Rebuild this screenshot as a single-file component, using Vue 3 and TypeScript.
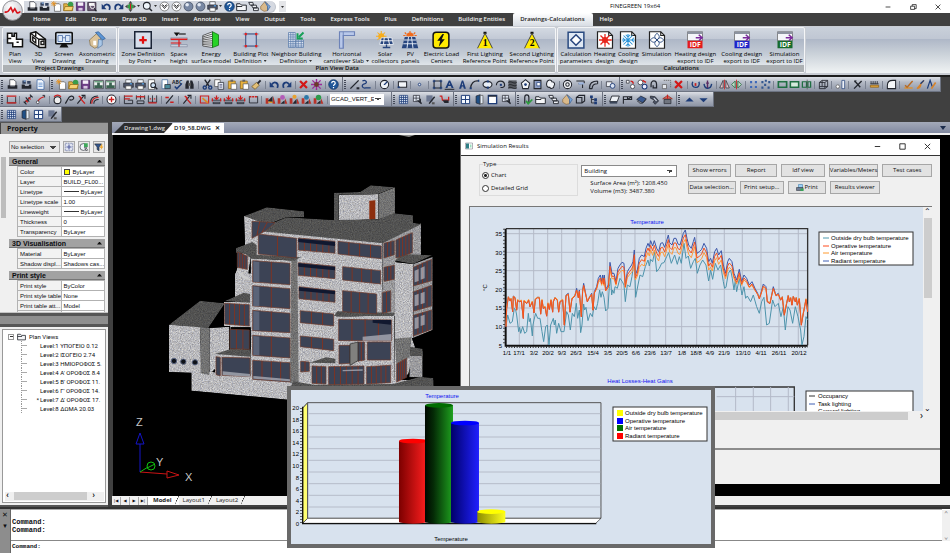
<script setup lang="ts">
import { ref } from 'vue'

type ToolItem = string
interface RibbonItem { icon: string; lines: string[]; drop?: boolean }
interface RibbonPanel { id: string; title: string; items: RibbonItem[] }
interface PropRow { name: string; value: string; kind?: 'color' | 'line' }
interface PropGroup { title: string; rows: PropRow[] }

const N = '#1d3c78'
const K = '#23262e'
const R = '#cc1f1f'
const st = (c: string, w = 1.4) => `fill="none" stroke="${c}" stroke-width="${w}"`

const glyphs: Record<string, string> = {
  drw: `<path d="M4 1h6l3 3v6H4z" fill="#fff" stroke="${K}"/><path d="M1 9h3l1 2h6l1-2h3v5H1z" fill="${K}"/>`,
  bld: `<path d="M2 2h5v5H2zM9 3h5v4H9z" fill="#35435f"/><path d="M4 2h3v2H4z" fill="#7fa6d8"/><path d="M1 8h4l1 2h5l1-2h3v6H1z" fill="${K}"/>`,
  page: `<path d="M3 1h7l3 3v11H3z" fill="#f7fbff" stroke="#2c5aa0"/><path d="M5 6h6M5 8.500h6M5 11h6" ${st('#3f78c4', 1)}/>`,
  new: `<path d="M5 4h7l2 2v9H5z" fill="#fff" stroke="#555"/><path d="M4 0v8M0 4h8M1 1l6 6M7 1L1 7" ${st('#e6901e', 1.2)}/>`,
  open: `<path d="M1 4h5l1 2h7v8H1z" fill="#e2b443" stroke="#8a6414"/><circle cx="11" cy="5" r="4" fill="#3a9c4b"/><path d="M3 8h12l-2 6H1z" fill="#f6d272" stroke="#8a6414"/>`,
  save: `<path d="M2 2h12v12H2z" fill="#6c3d86" stroke="#3e1d55"/><path d="M4 2h8v5H4z" fill="#f4eef8"/><path d="M5 10h6v4H5z" fill="#d8c8e2"/>`,
  saveas: `<path d="M1 2h12v12H1z" fill="#6c5a76" stroke="#2d2433"/><path d="M3 3h8v4H3z" fill="#fff"/><path d="M8 7l7 8-3 0z" fill="${K}"/><circle cx="8" cy="8" r="3" ${st('#eee')}/>`,
  undo: `<path d="M4 8c4-6 11-2 8 5" ${st(N, 2.6)}/><path d="M1 4v8h7z" fill="${N}"/>`,
  redo: `<path d="M12 8C8 2 1 6 4 13" ${st(N, 2.6)}/><path d="M15 4v8H8z" fill="${N}"/>`,
  pan: `<path d="M8 0l3 4H5zM8 16l3-4H5zM0 8l4-3v6zM16 8l-4-3v6z" fill="#444"/><circle cx="8" cy="8" r="4" fill="#35a045"/><path d="M8 4v8" ${st(R, 1.5)}/>`,
  mag: `<circle cx="7" cy="7" r="5" fill="#eef4fa" stroke="${K}" stroke-width="1.5"/><path d="M10.500 10.500l4 4" ${st(K, 2.2)}/>`,
  chk: `<circle cx="8" cy="8" r="6.500" fill="#fbfbfd" stroke="#555"/><path d="M4 6l4 5 4-5M5 5l3 3 3-3" ${st('#333', 1.4)}/>`,
  sphere: `<circle cx="8" cy="8" r="6.500" fill="#7888a4" stroke="#3c4659"/><circle cx="6" cy="5.500" r="2.600" fill="#e3e9f3"/>`,
  print: `<path d="M4 1h8v5H4z" fill="#f5f9ff" stroke="#444"/><path d="M1 6h14v6H1z" fill="#4d566b" stroke="${K}"/><path d="M4 10h8v5H4z" fill="#fff" stroke="#444"/><path d="M10 7h3" ${st('#57b1ff', 1.5)}/>`,
  printc: `<path d="M5 1h8v7H5z" fill="#9bd0f5" stroke="#2b6ca0"/><path d="M1 7h13v6H1z" fill="#6f7c94" stroke="${K}"/><path d="M9 9h6v5H9z" fill="#37a457"/>`,
  help: `<circle cx="8" cy="8" r="7" fill="#1f5799" stroke="#0e2f5c"/><path d="M5.500 6c0-3.500 5-3 5 0 0 2-2.500 1.700-2.500 4M8 11.500v2" ${st('#fff', 1.8)}/>`,
  folder: `<path d="M1 4h5l2 2h7v8H1z" fill="#f5f6f8" stroke="${K}" stroke-width="1.400"/><path d="M1 8h8" ${st(K)}/>`,
  copy3: `<path d="M1 2h6l1 4H3zM5 6h7l1 4H7zM8 10h7v4H8z" fill="#eceef2" stroke="${K}" stroke-width="1.300"/>`,
  house: `<path d="M1 8l6-7 4 3v10l-5 1-5-3z" fill="#d9b98a" stroke="#8a6b42"/><path d="M7 1l8 7-4 6V8z" fill="#7ba8dc" stroke="#3a6096"/>`,
  img: `<path d="M1 2h14v12H1z" fill="#e9ecec" stroke="${K}"/><path d="M2 13V9h4V5h4v4h4v4z" fill="#3b6351"/><path d="M2 4h12" ${st('#4a8f63', 1.500)}/>`,
  preview: `<path d="M2 1h9v14H2z" fill="#fff" stroke="#444"/><circle cx="9" cy="9" r="3.500" fill="#cfe2f5" stroke="${K}" stroke-width="1.500"/><path d="M11 11l4 4" ${st(K, 2)}/>`,
  publish: `<path d="M3 1h8v13H3z" fill="#fff" stroke="#3e6c9f"/><path d="M7 8h8v6H7z" fill="#4c8b9b" stroke="${K}"/>`,
  abc: `<text x="0" y="7" font-size="7.500" font-weight="700" fill="${K}">ABC</text><path d="M4 11l3 3 7-7" ${st(N, 2.200)}/>`,
  find: `<path d="M2 14V8l2-6h3v12zM14 14V8l-2-6H9v12z" fill="${K}"/><path d="M6 6h4v4H6z" fill="#555"/>`,
  cut: `<path d="M4 1l6 9M12 1L6 10" ${st(K, 2)}/><circle cx="4" cy="12.500" r="2.300" ${st(N, 2)}/><circle cx="12" cy="12.500" r="2.300" ${st(N, 2)}/>`,
  copy: `<path d="M1 1h8v10H1z" fill="#fff" stroke="#444"/><path d="M6 5h8v10H6z" fill="#e2e9f4" stroke="${K}"/><path d="M8 8h4M8 10h4M8 12h4" ${st('#557', 1)}/>`,
  paste: `<path d="M2 3h10v11H2z" fill="#e9b13c" stroke="#8a6414"/><path d="M5 1h4v3H5z" fill="#666"/><path d="M6 7h8v8H6z" fill="#fff" stroke="#555"/>`,
  brush: `<path d="M13 1l2 2-5 5-2-2z" fill="${K}"/><path d="M8 5l4 4-6 6-5-4z" fill="#e3c078" stroke="#6c5320"/>`,
  del: `<path d="M3 3l10 10M13 3L3 13" ${st('#d31616', 3.200)}/>`,
  burst: `<path d="M8 0v16M0 8h16M2 2l12 12M14 2L2 14" ${st('#9b2a9b', 2)}/><circle cx="8" cy="8" r="3.500" fill="#6a3a2a"/>`,
  line: `<path d="M2 14L14 2" ${st(K, 2)}/><path d="M11 12h4v3h-4z" fill="${K}"/>`,
  pline: `<path d="M2 3c6-3 8 3 3 4s-4 7 2 6h7" ${st(N, 1.800)}/>`,
  circle: `<circle cx="8" cy="8" r="6" fill="#eef2f7" stroke="${K}" stroke-width="1.500"/><path d="M8 8l4-4M7 8h2" ${st(N, 1.700)}/>`,
  rect: `<path d="M2 4h12v8H2z" fill="#f3f6fa" stroke="${K}" stroke-width="1.500"/><path d="M1 12h3" ${st(N, 2.500)}/>`,
  dot: `<circle cx="8" cy="8" r="1.800" fill="#e8edf4" stroke="${N}" stroke-width="1.300"/>`,
  region: `<path d="M3 3h10v10H3z" ${st(K, 1.600)}/><path d="M1 3h4M3 1v4M11 3h4M13 1v4M1 13h4M3 11v4M11 13h4M13 11v4" ${st(N, 1.400)}/>`,
  bigA: `<path d="M2 13L7 2h2l5 11h-3l-1-3H6l-1 3zM7 8h2L8 5z" fill="${N}"/><path d="M1 15h14" ${st(K, 1.500)}/>`,
  capA: `<path d="M3 14L7 2h2l4 12h-3l-1-3H7l-1 3zM7 9h2L8 5z" fill="${N}"/>`,
  arc: `<path d="M2 14C3 6 7 2 14 3" ${st(K, 1.700)}/><path d="M1 12h3v3H1zM13 1h2v3h-2z" fill="${N}"/>`,
  ellipse: `<ellipse cx="8" cy="8" rx="6.500" ry="4.500" fill="#e8eef6" stroke="${K}" stroke-width="1.600"/><path d="M7 2h3v3H7zM7 11h3v3H7z" fill="${N}"/>`,
  earc: `<path d="M2 9c0-8 12-8 12 0 0 3-4 4-6 3" ${st(K, 1.700)}/><path d="M7 7h3v3H7z" fill="${N}"/>`,
  hatch: `<path d="M2 2h12v12H2z" fill="#55585f"/><path d="M2 5c4-3 8 3 12 0M2 9c4-3 8 3 12 0M2 13c4-3 8 3 12 0" ${st('#16181c', 1.200)}/>`,
  poly: `<path d="M8 1l6 5-2 8H4L2 6z" fill="#f1f4f8" stroke="${K}" stroke-width="1.500"/><circle cx="8" cy="8" r="2" fill="${N}"/>`,
  wip: `<path d="M3 2h10v12H3z" fill="#8f9fc4" stroke="${K}" stroke-width="1.500"/><path d="M7 5h5v5H7z" fill="#fff" stroke="${N}"/>`,
  cloud: `<path d="M3 4c2-4 7-3 7 0 4 0 5 4 3 6 0 4-5 5-6 2-4 1-6-3-4-8z" fill="#f3f5f9" stroke="${K}" stroke-width="1.500"/>`,
  donut: `<circle cx="8" cy="8" r="6" fill="#f3f5f9" stroke="${K}" stroke-width="1.500"/><circle cx="8" cy="8" r="2.500" ${st(K, 1.500)}/>`,
  spline: `<path d="M2 3h11c3 4-5 4-8 4M6 7l5 0v6" ${st(K, 1.500)}/><path d="M5 5h8v3H5z" fill="#9db4dd"/>`,
  off: `<path d="M2 14C2 6 6 3 14 3M6 14c0-5 3-7 8-7M2 14h4M14 3v4" ${st(K, 1.600)}/>`,
  block: `<path d="M2 4h8v7H2z" fill="#eef1f6" stroke="${K}"/><circle cx="11" cy="10" r="3.500" fill="#dbe4f2" stroke="${N}" stroke-width="1.300"/>`,
  cyc: `<path d="M2 2h4v4H2z" fill="#fff" stroke="${K}"/><circle cx="11" cy="11" r="3" fill="#fff" stroke="${K}"/><path d="M8 3c4 0 4 2 4 4" ${st(R, 2)}/>`,
  cyc2: `<circle cx="5" cy="5" r="3.500" fill="#fff" stroke="${K}"/><circle cx="11" cy="11" r="3.500" fill="#eef" stroke="${N}" stroke-width="1.500"/><path d="M8 2l5 3" ${st(R, 2)}/>`,
  lock: `<path d="M3 12V8c0-7 8-7 8 0v5H6V9" ${st(K, 1.800)}/>`,
  scale: `<path d="M2 8h6v6H2z" fill="#e6e9ee" stroke="#555"/><path d="M4 2h10v10" fill="none" stroke="#555" stroke-dasharray="2 1"/>`,
  rot: `<path d="M4 4c-5 10 13 12 9 0" ${st(N, 2)}/><path d="M8 6v4" ${st(R, 2.500)}/>`,
  rot2: `<path d="M3 7c1 9 10 8 11 0" ${st(N, 2)}/><path d="M8 2v11M6 6h4" ${st('#5b2b62', 2)}/>`,
  mirror: `<path d="M6 2v11H1zM10 2v11h5z" fill="#e9c9cd" stroke="${K}"/><path d="M8 1v14" ${st(R, 1.200)}/>`,
  mirror2: `<path d="M6 3L1 8l5 5zM10 3l5 5-5 5z" fill="#c4e3cf" stroke="#2f6f44" stroke-width="1.300"/><path d="M8 1v14" ${st(R, 1.200)}/>`,
  array: `<path d="M3 3h3v3H3zM10 3h3v3h-3zM3 10h3v3H3zM10 10h3v3h-3z" fill="#3c68b8"/>`,
  array2: `<path d="M7 1h3v3H7zM2 3h3v3H2zM12 3h3v3h-3zM6 7h3v3H6zM2 11h3v3H2zM11 11h3v3h-3z" fill="#33578f"/>`,
  trim: `<path d="M2 4h12v8H2z" fill="none" stroke="#1f6e42" stroke-width="2.400"/><path d="M5 2h6" ${st('#b7d4c3', 2)}/>`,
  ext: `<path d="M2 4h12v8H2z" fill="#d5eadd" stroke="#1f6e42" stroke-width="2.200"/>`,
  brk: `<path d="M2 4h6v8H2zM10 4h4v8h-4z" fill="none" stroke="#1f6e42" stroke-width="1.800"/><path d="M9 1v14" ${st('#555', 1)}/>`,
  box3: `<path d="M2 5l4-3h8v9l-4 3H2zM2 5h8v9M10 5l4-3M6 2v9H2M6 11h8" ${st(K, 1.200)}/>`,
  align: `<circle cx="4" cy="11" r="2.500" fill="#fff" stroke="#555"/><path d="M10 2h4v12h-4z" fill="#eef1f6" stroke="${N}"/>`,
  xl: `<path d="M3 14L14 3M4 3l8 9" ${st(K, 2)}/><path d="M3 2h4l-3 3z" fill="${K}"/>`,
  rul: `<path d="M2 9h12v3H2z" fill="#e0a53a" stroke="#8a5a10"/><path d="M3 3v4M6 3v4M9 3v4M12 3v4M2 7h12" ${st(K, 1.200)}/>`,
  fill: `<path d="M2 14V9c0-5 4-7 8-7h4v12z" fill="#f5f7fa" stroke="${K}" stroke-width="1.500"/>`,
  pen: `<path d="M2 13h12" ${st('#e0902a', 2)}/><path d="M3 9l3 3 8-9" ${st('#b96a22', 2)}/>`,
  pen2: `<path d="M3 14L13 2M3 14c4-1 6-4 5-7" ${st('#d8842a', 2.200)}/><path d="M8 7l5-5" ${st(N, 2)}/>`,
  pen3: `<path d="M2 14L6 2l3 9" ${st(N, 1.800)}/><path d="M8 14l6-9" ${st('#d8842a', 2.500)}/>`,
  dim: `<path d="M2 4v9h12V4" ${st(K, 1.200)}/><path d="M1 3h14M1 13h14" ${st(R, 1.800)}/>`,
  dimA: `<path d="M2 13L12 3M4 5l5 6M1 11l4 4M10 1l4 4" ${st(K, 1.600)}/><path d="M4 9l3 3M8 5l3 3" ${st(R, 2)}/>`,
  dimR: `<path d="M4 13c0-5 3-7 9-9" ${st(R, 1.800)}/><circle cx="4" cy="12" r="2" fill="#fff" stroke="${K}"/><path d="M11 2h3v3" ${st(K)}/>`,
  dimC: `<circle cx="8" cy="9" r="5" fill="#eee" stroke="${K}" stroke-width="1.500"/><path d="M3 4c3-3 7-3 10 0" ${st(R, 2)}/>`,
  lead: `<path d="M2 14l4-7c2-5 7-5 8-2s-4 5-6 3" ${st(K, 1.800)}/>`,
  dimX: `<path d="M2 14L11 3M8 2h5v5" ${st(K, 1.600)}/><path d="M6 6l7 8M4 3l4 3" ${st(R, 2)}/>`,
  dimO: `<path d="M2 14C2 7 6 3 13 3M7 14c0-4 2-6 7-6" ${st(K, 1.500)}/><path d="M4 14C4 8 8 5 14 5" ${st(R, 1.700)}/>`,
  plus: `<circle cx="8" cy="8" r="6.500" fill="#fff" stroke="${K}" stroke-width="1.500"/><path d="M4 8h8M8 4v8" ${st(R, 2)}/>`,
  dimB: `<path d="M2 2v12h12V9H7" ${st(K, 1.300)}/><path d="M2 3h12M2 7h8" ${st(R, 2)}/>`,
  dimD: `<path d="M2 2v6M8 2v6M14 2v6M3 10h10v4H3z" ${st(K, 1.300)}/><path d="M2 4h12" ${st(R, 2)}/>`,
  dimE: `<path d="M2 2v10h12V2M8 2v10" ${st(K, 1.200)}/><path d="M4 7h2M10 7h2M2 13h12" ${st(R, 1.800)}/>`,
  tol: `<path d="M3 14L13 2" ${st(K, 1.700)}/><path d="M2 5h5M9 12h5" ${st(R, 2)}/>`,
  edit: `<path d="M2 3h12v10H2z" ${st(R, 1.600)}/><path d="M5 6l8 7" ${st('#dd8b24', 2.500)}/>`,
  dimF: `<path d="M1 9h14M3 12h10v2H3z" ${st(K, 1.200)}/><path d="M8 2v6M5 5l3 3 3-3M2 6v5M14 6v5" ${st(R, 1.700)}/>`,
  dimG: `<path d="M2 3v10h12V3" ${st(K, 1.200)}/><path d="M2 4h12" stroke="${R}" stroke-width="2" stroke-dasharray="3 1"/>`,
  persA: `<path d="M1 6v8h4V6zM12 3l3 11h-4z" fill="#b8332a"/><path d="M4 10l7-7v10z" fill="${K}"/><path d="M5 12h6" ${st('#e8a12e', 2)}/>`,
  persB: `<path d="M1 6v8h4V6zM12 6l3 8h-4z" fill="#b8332a"/><circle cx="8" cy="5" r="3.500" fill="#b45bb8"/><path d="M5 14h6V9z" fill="${K}"/>`,
  persC: `<path d="M1 6v8h4V6zM12 6l3 8h-4z" fill="#b8332a"/><circle cx="8" cy="4" r="3" fill="#e8a12e"/><path d="M5 14l6-7v7z" fill="${K}"/>`,
  persD: `<path d="M1 6v8h4V6zM12 6l3 8h-4z" fill="#b8332a"/><circle cx="8" cy="5" r="3.500" fill="#2c78a8"/><path d="M5 14l6-5v5z" fill="${K}"/>`,
  persE: `<path d="M1 6v8h4V6zM12 6l3 8h-4z" fill="#b8332a"/><circle cx="8" cy="5" r="4" fill="#2d9a4b"/><path d="M5 14l6-5v5z" fill="${K}"/>`,
  mesh: `<path d="M2 2h12v12H2z" fill="#d5e1f2" stroke="${N}"/><path d="M2 5h12M2 8h12M2 11h12M5 2v12M8 2v12M11 2v12" ${st(N, 1.100)}/>`,
  door: `<path d="M3 3l6-2v14l-6-2z" fill="#1f4f86" stroke="${K}"/><path d="M9 2h4v12H9z" fill="#e3ecf7" stroke="#555"/>`,
  win: `<path d="M2 2h12v12H2z" fill="#f3f8ff" stroke="${N}" stroke-width="1.400"/><path d="M8 2v12M2 8h12" ${st(N, 1.400)}/>`,
  winD: `<path d="M2 2h9v9H2z" fill="#dfe6f0" stroke="${K}"/><path d="M2 6h9M6 2v9" ${st(K, 1)}/><path d="M8 9l6 5M12 7v6" ${st(K, 2)}/>`,
  meshD: `<path d="M2 2h9v9H2z" fill="#6c7790"/><path d="M6 14L14 4" ${st(K, 2)}/><path d="M10 12h4v3h-4z" fill="#555"/>`,
  frame: `<path d="M2 2h12v12H2z" fill="#fff" stroke="${N}" stroke-width="2"/><path d="M2 3h12" ${st(K, 2)}/>`,
  cart: `<path d="M1 3l3 0 1 6h9V4" ${st(R, 1.800)}/><path d="M5 9h9v4H8z" fill="${K}"/>`,
  okp: `<path d="M4 14V5c0-5 6-5 6 0v8" ${st(K, 1.700)}/><path d="M6 10l3 4 6-6" ${st('#2d9a3e', 2.500)}/>`,
  tree: `<path d="M3 2h4v4H3zM9 6h4v4H9zM9 11h4v4H9z" fill="${N}"/><path d="M5 6v7h4M5 8h4" ${st(K, 1.200)}/>`,
  cube: `<path d="M2 5h8v8H2zM2 5l4-3h8v8l-4 3" ${st(K, 1.600)}/>`,
  slab: `<path d="M4 3h11l-3 8H1z" fill="#eef1f5" stroke="${K}" stroke-width="1.300"/><path d="M1 11h11v3H1z" fill="#3a4559"/>`,
  stair: `<path d="M2 14V4h12M2 8h6V4M8 8l6-4v4H8" ${st(K, 1.600)}/>`,
  roof: `<path d="M1 8l6-5 8 4-5 6z" fill="#39598f" stroke="${K}"/><path d="M2 10c4 5 8 5 12-2" ${st(K, 1.300)}/>`,
  pipe: `<path d="M2 3l7 1 5 6-5 5-3-3 2-3-6-3z" fill="#4a5162" stroke="${K}"/><path d="M7 6l4 4" ${st('#dfe5ee', 1.500)}/>`,
  hut: `<path d="M1 7l7-5 7 5z" fill="#d0645a" stroke="#8b2a22"/><path d="M3 8h10v6H3z" fill="#70757f" stroke="${K}"/><path d="M8 1v6" ${st(R, 1.500)}/>`,
  up: `<path d="M2 11l6-6 6 6z" fill="${N}"/>`,
  down: `<path d="M2 6l6 6 6-6z" fill="${N}"/>`,
  filt: `<path d="M1 3h11l-4 5v6l-3-2V8z" fill="#33578f" stroke="${K}"/><path d="M12 4l-3 5h3l-2 5 5-7h-3l2-3z" fill="#f0a31e"/>`,
  sel: `<path d="M2 2h12v12H2z" fill="#dfe3f0" stroke="#5d6796" stroke-dasharray="3 1"/><path d="M4 8h8M8 4v8" ${st('#5560a0', 1.800)}/>`,
  quick: `<circle cx="7" cy="8" r="5.500" fill="#eef2f7" stroke="${K}"/><path d="M8 2h6v6H8z" fill="#3fa85a"/><path d="M9 8l5 5-3 1z" fill="#fff" stroke="${K}"/>`,
}

const big: Record<string, string> = {
  plan: `<path d="M2 3h6v4h3V3h3v8h8v10H9v-5H2z" fill="#fff" stroke="#111" stroke-width="2"/><path d="M2 10h5M14 15h3" ${st('#111', 2)}/>`,
  view3d: `<path d="M2 3l7-2 13 10v11l-8 0L2 14z" fill="#fff" stroke="#111" stroke-width="2"/><path d="M2 3l11 8v11M13 11h9M5 8l4 3v5l-4-3zM16 14l4-1v5h-4zM9 1v6" ${st('#111', 1.800)}/>`,
  screen: `<rect x="1" y="2" width="22" height="15" rx="1.500" fill="#dce8f6" stroke="#111" stroke-width="2.200"/><path d="M4 6h6v8H4zM14 6h6v8h-6zM10 9h4" ${st('#5a7bb0', 1.200)}/><path d="M9 17h6l3 5H6z" fill="#111"/>`,
  axo: `<path d="M2 12l10-9 5 3v13l-8 4-6-4z" fill="#dbc39a" stroke="#8a744c"/><path d="M10 2l4-1 9 9-4 2z" fill="#5b94d4" stroke="#2e5c96"/><path d="M14 11l5 1v7l-6 4z" fill="#a9c7e8" stroke="#5e7ea4"/><path d="M7 13h4v6H7z" fill="#fff"/>`,
  zone: `<path d="M1 1h22v22H1z" fill="#d7dfec" stroke="#1b2436" stroke-width="2"/><path d="M12 7v10M7 12h10" ${st('#e01010', 3)}/>`,
  height: `<path d="M5 2h8L9 7z" fill="#111"/><path d="M12 4h9" ${st('#111', 1.500)}/><path d="M1 9h22v3H1zM1 18h22v3H1z" fill="#c9cfdb" stroke="#8a93a8"/><path d="M1 11h22" ${st('#e01010', 1.800)}/><path d="M1 16h14M12 12v9" ${st('#e01010', 1.500)}/>`,
  energy: `<path d="M1 6l13-5v21L1 20z" fill="#f1f3f6" stroke="#333"/><path d="M1 8l13-4M1 10l13-3M1 12l13-2M1 14l13-1M1 16h13M1 18l13 1" ${st('#333', 1)}/><path d="M14 1l8 4v14l-8 3z" fill="#27d327" stroke="#127012"/>`,
  plot: `<path d="M5 1v22M19 1v22M1 4h22M1 20h22" ${st('#8196bd', 1.500)}/><path d="M5 4h14v16H5z" fill="#b9c5dc" stroke="#3a4d7a" stroke-width="1.300"/><path d="M3.500 2.500h3v3h-3zM17.500 2.500h3v3h-3zM3.500 18.500h3v3h-3zM17.500 18.500h3v3h-3z" fill="#e02020"/>`,
  neighbor: `<path d="M2 2h9v20H2zM12 12h10v10H12z" fill="#dfe7f4" stroke="#5d7dab"/><path d="M2 5h9M2 8h9M2 11h9M2 14h20M2 17h20M2 20h20M5 2v20M8 2v20M15 12v10M19 12v10" ${st('#5d7dab', 1)}/><path d="M22 2l-6 6M14 3v7h7" ${st('#17a058', 2.600)}/>`,
  cant: `<path d="M2 1h20v5H7v17H2z" fill="#b8c8ea" stroke="#6d83b8" stroke-width="1.500"/><path d="M7 1v22" ${st('#6d83b8', 1.200)}/>`,
  solar: `<circle cx="7" cy="7" r="4" fill="#f7ad1d"/><path d="M7 0v14M0 7h14M2 2l10 10M12 2L2 12" ${st('#f7ad1d', 1.400)}/><path d="M7 9h14l2 9H5z" fill="#27457e" stroke="#fff"/><path d="M6 13h16M11 9l-1 9M16 9l2 9" ${st('#fff', 1.200)}/><path d="M14 18v4M9 22h10" ${st('#27457e', 1.800)}/>`,
  pv: `<path d="M7 7a5 5 0 0 1 10 0z" fill="#f06a1c"/><path d="M12 0v3M5 2l2 2M19 2l-2 2M3 6h3M21 6h-3" ${st('#f06a1c', 1.500)}/><path d="M5 8h14l4 15H1z" fill="#27457e"/><path d="M4 12h16M3 17h18M10 8l-2 15M14 8l2 15" ${st('#dfe7f4', 1.300)}/>`,
  elec: `<rect x="1.500" y="1.500" width="21" height="21" rx="4" fill="#ffea00" stroke="#111" stroke-width="2"/><path d="M14 4L7 13h4l-2 8 8-10h-4l3-7z" fill="#111"/>`,
  light1: `<path d="M10 1h4v3h-4z" fill="#111"/><path d="M12 3l10 20H2z" fill="#ffea00"/><path d="M12 3l10 20M12 3L2 23" ${st('#444', 1.300)}/><text x="9" y="20" font-family="Liberation Serif, serif" font-size="13" font-weight="700">1</text>`,
  light2: `<path d="M10 1h4v3h-4z" fill="#111"/><path d="M12 3l10 20H2z" fill="#ffea00"/><path d="M12 3l10 20M12 3L2 23" ${st('#444', 1.300)}/><text x="9" y="20" font-family="Liberation Serif, serif" font-size="13" font-weight="700">2</text>`,
  calc: `<path d="M1.500 1.500h21v21h-21z" fill="#dfe8f4" stroke="#2a4a80" stroke-width="2"/><path d="M12 5l7 7-7 7-7-7z" fill="#fff" stroke="#27457e" stroke-width="2"/>`,
  heat: `<path d="M2 1h15l5 5v17H2z" fill="#fff" stroke="#222" stroke-width="1.600"/><path d="M17 1v5h5" ${st('#222', 1.500)}/><path d="M12 4v17M4 12h17M6 6l12 12M18 6L6 18" ${st('#e8261c', 1.700)}/><circle cx="12" cy="12" r="4" fill="#e8261c"/>`,
  cool: `<path d="M2 1h15l5 5v17H2z" fill="#fff" stroke="#222" stroke-width="1.600"/><path d="M17 1v5h5" ${st('#222', 1.500)}/><path d="M12 4v17M4 12h17M6 6l12 12M18 6L6 18M9 5l3 3 3-3M9 20l3-3 3 3M5 9l3 3-3 3M20 9l-3 3 3 3" ${st('#2a93d8', 1.400)}/>`,
  sim: `<path d="M2 1h15l5 5v17H2z" fill="#fff" stroke="#222" stroke-width="1.600"/><path d="M17 1v5h5" ${st('#222', 1.500)}/><path d="M12 3c4 4 4 5 0 9-4-4-4-5 0-9zM12 12c4 4 4 5 0 9-4-4-4-5 0-9zM3 12c4-4 5-4 9 0-4 4-5 4-9 0zM12 12c4-4 5-4 9 0-4 4-5 4-9 0z" ${st('#2a4a80', 1.300)}/>`,
}
const idf = (c: string) =>
  `<path d="M2 1h20v12H2z" fill="#f4f6fa" stroke="#666"/><path d="M2 1h20v3H2z" fill="#8c93a0"/><path d="M2 13h20v10H2z" fill="${c}"/><text x="5" y="21" font-size="9" font-weight="700" fill="#fff">IDF</text><path d="M13 9h8M17 5l4.500 4-4.500 4" ${st('#7a2a9b', 2)}/>`
big.idfR = idf('#e31b1b')
big.idfB = idf('#1f24c9')
big.idfG = idf('#176b2c')

const quick = ['drw', 'bld', 'new', 'open', 'save', 'saveas', '|', 'undo', 'redo', 'pan', '^', 'mag', '^', 'chk', 'chk', 'sphere', 'sphere', 'print', '^', 'help', 'folder', 'copy3', 'house']

const menus = ['Home', 'Edit', 'Draw', 'Draw 3D', 'Insert', 'Annotate', 'View', 'Output', 'Tools', 'Express Tools', 'Plus', 'Definitions', 'Building Entities', 'Drawings-Calculations', 'Help']
const activeMenu = ref('Drawings-Calculations')

const panels: RibbonPanel[] = [
  { id: 'proj', title: 'Project Drawings', items: [
    { icon: 'plan', lines: ['Plan', 'View'] }, { icon: 'view3d', lines: ['3D', 'View'] },
    { icon: 'screen', lines: ['Screen', 'Drawing'] }, { icon: 'axo', lines: ['Axonometric', 'Drawing'] } ] },
  { id: 'data', title: 'Plan View Data', items: [
    { icon: 'zone', lines: ['Zone Definition', 'by Point'], drop: true }, { icon: 'height', lines: ['Space', 'height'] },
    { icon: 'energy', lines: ['Energy', 'surface model'] }, { icon: 'plot', lines: ['Building Plot', 'Definition'], drop: true },
    { icon: 'neighbor', lines: ['Neighbor Building', 'Definition'], drop: true }, { icon: 'cant', lines: ['Horizontal', 'cantilever Slab'], drop: true },
    { icon: 'solar', lines: ['Solar', 'collectors'] }, { icon: 'pv', lines: ['PV', 'panels'] },
    { icon: 'elec', lines: ['Electric Load', 'Centers'] }, { icon: 'light1', lines: ['First Lighting', 'Reference Point'] },
    { icon: 'light2', lines: ['Second Lighting', 'Reference Point'] } ] },
  { id: 'calc', title: 'Calculations', items: [
    { icon: 'calc', lines: ['Calculation', 'parameters'] }, { icon: 'heat', lines: ['Heating', 'design'] },
    { icon: 'cool', lines: ['Cooling', 'design'] }, { icon: 'sim', lines: ['Simulation', ''] },
    { icon: 'idfR', lines: ['Heating design', 'export to IDF'] }, { icon: 'idfB', lines: ['Cooling design', 'export to IDF'] },
    { icon: 'idfG', lines: ['Simulation', 'export to IDF'] } ] },
]

const bars: { id: string; tools: ToolItem[][] }[] = [
  { id: 'one', tools: [
    'drw bld page'.split(' '),
    'new open save img img | print print preview publish abc find | cut copy paste paste brush | undo redo | del burst | help'.split(' '),
    'line pline | circle | rect | dot | region bigA capA arc ellipse earc hatch poly wip cloud | donut spline off | block'.split(' '),
    'cyc cyc2 lock scale del | rot rot2 | mirror mirror2 | array array2 | trim ext brk | box3 | align | xl | rul | fill | pen pen2 pen3'.split(' '),
  ] },
  { id: 'two', tools: [
    'dim | dimA dimR | dimC lead dimX dimO | plus | dimB dimD dimE | tol | dimX | edit dimF dimF dimF dimG | persA persB persC persD persE | #'.split(' '),
    'mesh winD meshD cart'.split(' '),
    'win door frame winD'.split(' '),
    'okp folder copy3 house cube tree'.split(' '),
    'slab stair roof pipe hut'.split(' '),
    'up down'.split(' '),
  ] },
  { id: 'three', tools: ['mesh door win meshD'.split(' ')] },
]

const groups: PropGroup[] = [
  { title: 'General', rows: [
    { name: 'Color', value: 'ByLayer', kind: 'color' }, { name: 'Layer', value: 'BUILD_FL00...' },
    { name: 'Linetype', value: 'ByLayer', kind: 'line' }, { name: 'Linetype scale', value: '1.00' },
    { name: 'Lineweight', value: 'ByLayer', kind: 'line' }, { name: 'Thickness', value: '0' },
    { name: 'Transparency', value: 'ByLayer' } ] },
  { title: '3D Visualisation', rows: [
    { name: 'Material', value: 'ByLayer' }, { name: 'Shadow displ...', value: 'Shadows cas...' } ] },
  { title: 'Print style', rows: [
    { name: 'Print style', value: 'ByColor' }, { name: 'Print style table', value: 'None' },
    { name: 'Print table att...', value: 'Model' }, { name: 'Print table type', value: 'Color depend...' } ] },
]

const levels = ['Level:1 ΥΠΟΓΕΙΟ 0.12', 'Level:2 ΙΣΟΓΕΙΟ 2.74', 'Level:3 ΗΜΙΟΡΟΦΟΣ 5.', "Level:4 Α' ΟΡΟΦΟΣ 8.4", "Level:5 Β' ΟΡΟΦΟΣ 11.", "Level:6 Γ' ΟΡΟΦΟΣ 14.", "Level:7 Δ' ΟΡΟΦΟΣ 17.", 'Level:8 ΔΩΜΑ 20.03']

// Facade glazing: four corners (clockwise from top left) and number of panes
const glazing: number[][] = [
  [276, 124, 345, 128, 320, 150, 276, 175, 3],
  [295, 162, 410, 175, 410, 234, 295, 222, 2], [415, 174, 525, 184, 525, 220, 415, 210, 6], [534, 184, 664, 198, 664, 236, 534, 222, 4],
  [415, 248, 525, 259, 525, 296, 415, 286, 6], [548, 260, 662, 272, 662, 312, 548, 300, 4],
  [417, 320, 525, 332, 525, 367, 417, 356, 6], [548, 332, 650, 342, 650, 402, 548, 395, 4],
  [421, 392, 521, 402, 521, 438, 421, 428, 3], [421, 468, 521, 478, 521, 512, 421, 500, 3],
  [278, 242, 390, 250, 390, 314, 278, 306, 2], [278, 317, 390, 326, 390, 386, 278, 378, 2], [278, 391, 390, 400, 390, 458, 278, 452, 2],
  [278, 466, 390, 474, 390, 534, 278, 526, 2], [278, 541, 390, 548, 390, 606, 278, 598, 4],
  [672, 190, 703, 182, 703, 224, 672, 234, 3], [708, 180, 757, 158, 757, 218, 708, 234, 5], [672, 262, 703, 256, 703, 298, 672, 304, 3],
  [667, 338, 692, 332, 692, 394, 667, 400, 2],
  [194, 370, 268, 374, 268, 438, 194, 432, 5], [210, 448, 268, 450, 268, 508, 210, 506, 3], [186, 532, 270, 534, 270, 590, 186, 586, 1],
  [168, 530, 181, 532, 181, 588, 168, 584, 1],
  [760, 262, 815, 238, 815, 302, 760, 318, 4], [760, 336, 815, 316, 815, 378, 760, 394, 4], [760, 406, 815, 390, 815, 448, 760, 468, 4],
  [536, 418, 695, 420, 695, 482, 536, 482, 4], [537, 496, 570, 496, 570, 550, 537, 552, 1], [622, 486, 692, 486, 692, 540, 622, 540, 1], [594, 486, 614, 486, 614, 540, 594, 544, 2],
  [456, 558, 498, 560, 498, 612, 456, 610, 3], [506, 560, 612, 558, 612, 612, 506, 614, 6], [620, 560, 692, 556, 692, 608, 620, 612, 5],
  [710, 552, 740, 535, 740, 592, 710, 606, 5], [422, 544, 448, 546, 448, 574, 422, 576, 2],
  [232, 216, 262, 228, 262, 268, 232, 262, 4],
]
const quad = (q: number[]) => `${q[0]},${q[1]} ${q[2]},${q[3]} ${q[4]},${q[5]} ${q[6]},${q[7]}`
const mullions = (q: number[]) => {
  const out: string[] = []
  for (let i = 1; i < q[8]; i++) {
    const t = i / q[8]
    const ax = q[0] + (q[2] - q[0]) * t, ay = q[1] + (q[3] - q[1]) * t
    const bx = q[6] + (q[4] - q[6]) * t, by = q[7] + (q[5] - q[7]) * t
    out.push(`M${ax} ${ay}L${bx} ${by}`)
  }
  return out.join('')
}

// Yearly curves, as plot coordinates: x 138..1043 is the year, y 406 is 5 °C and y 71 is 35 °C
const radiant = '138,350 140,295 145,260 150,272 153,265 158,305 160,258 165,262 170,300 173,270 178,275 184,272 190,325 192,272 200,280 206,270 210,290 217,275 222,308 226,268 232,262 238,262 242,312 246,270 250,295 255,290 260,318 264,280 268,298 273,270 278,306 280,275 285,262 292,270 296,306 300,275 308,270 313,345 318,255 325,250 330,306 336,265 345,255 350,235 355,262 358,240 364,320 368,240 371,220 376,245 382,275 388,262 395,250 399,300 403,245 410,230 415,205 421,195 425,215 428,195 431,215 433,195 437,238 445,225 450,157 456,190 462,190 468,215 474,175 480,165 486,157 492,160 496,225 502,185 508,175 515,165 519,155 523,120 526,195 532,180 538,145 545,135 553,140 558,115 564,100 568,110 572,92 578,108 583,92 590,115 596,125 602,100 608,98 614,112 619,95 625,75 629,98 636,105 642,85 648,85 654,102 660,105 666,85 670,70 676,60 681,85 686,105 694,115 700,95 704,82 711,130 718,125 725,118 732,100 740,115 746,155 752,145 757,160 764,125 770,115 776,135 784,122 790,165 797,190 803,155 808,145 816,155 822,190 830,210 838,178 845,215 852,195 860,205 868,225 876,215 885,235 893,250 898,265 904,245 910,222 918,230 922,275 930,280 940,230 948,255 955,250 962,270 967,260 973,315 980,280 985,255 988,275 992,262 996,285 1000,258 1006,275 1009,262 1012,285 1018,265 1024,345 1030,310 1033,295 1038,268 1043,305'
const outside = '138,350 143,315 150,340 157,335 163,295 167,300 170,315 176,365 179,352 182,370 188,350 194,370 200,365 205,310 208,335 211,325 217,378 219,345 222,330 227,310 233,325 240,325 246,365 251,395 257,350 262,345 267,405 272,345 280,325 283,345 286,330 290,370 296,340 303,365 312,365 320,305 325,315 331,360 337,310 343,320 349,280 353,325 358,300 362,368 366,345 371,282 374,300 378,292 384,332 391,310 397,320 402,290 408,300 413,280 419,240 423,262 427,245 432,262 437,303 444,295 448,230 452,205 455,255 458,240 462,250 465,230 472,235 480,205 487,215 492,225 496,275 502,225 510,230 516,200 523,145 527,262 534,225 540,195 548,200 556,170 564,150 568,168 572,148 578,155 584,125 590,185 598,175 605,160 612,158 620,140 626,128 634,160 644,135 652,163 658,140 664,160 672,100 678,145 685,138 692,175 700,155 706,145 712,190 720,165 728,150 738,165 746,213 752,180 758,208 766,160 774,180 782,165 790,215 794,235 798,232 805,190 812,180 817,205 822,240 826,210 830,245 838,205 846,255 852,230 857,265 862,258 872,275 880,255 890,290 898,310 905,275 912,262 920,345 928,340 938,270 945,290 955,280 963,320 970,290 976,360 984,290 990,300 998,340 1006,290 1014,320 1022,360 1026,405 1032,380 1038,320 1043,330'
const shift = (src: string, k: number, winter: number) =>
  src.split(' ').map((p) => {
    const [x, y] = p.split(',').map(Number)
    const s = Math.max(0, Math.min(1, (270 - y) / 130))
    return `${x},${Math.round(y + k * s + winter * (1 - s))}`
  }).join(' ')
const operative = shift(radiant, 14, 1)
const air = shift(radiant, 28, -2)

const dates = ['1/1', '17/1', '3/2', '20/2', '9/3', '26/3', '15/4', '3/5', '20/5', '6/6', '23/6', '13/7', '1/8', '18/8', '4/9', '21/9', '13/10', '4/11', '26/11', '20/12']
const dateX = [38, 50, 65, 79, 93, 107, 124, 139, 153, 167, 181, 197, 213, 227, 241, 255, 274, 292, 310, 330]
const temps = [35, 30, 25, 20, 15, 10, 5]
const legend = [
  { t: 'Outside dry bulb temperature', c: '#4f9bb0', b: '#ffff00' },
  { t: 'Operative temperature', c: '#ff4a1c', b: '#0000ff' },
  { t: 'Air temperature', c: '#ff9a2e', b: '#007000' },
  { t: 'Radiant temperature', c: '#3f5fb4', b: '#ff0000' },
]
const cylinders = [
  { x: 342, top: 183, id: 'gr', cap: '#ff0000' },
  { x: 420, top: 76, id: 'gg', cap: '#006c00' },
  { x: 498, top: 129, id: 'gb', cap: '#0000ff' },
  { x: 577, top: 395, id: 'gy', cap: '#ffff00' },
]
const kind = ref('chart')
</script>

<template>
  <div class="shell">
    <header class="title">
      <div class="quick">
        <template v-for="(q, i) in quick" :key="i">
          <i v-if="q === '|'" class="gap"></i>
          <i v-else-if="q === '^'" class="caret"></i>
          <button v-else class="qa" :aria-label="q"><svg viewBox="0 0 16 16" v-html="glyphs[q]"></svg></button>
        </template>
      </div>
      <button class="more" aria-label="more"><i class="caret"></i></button>
      <span class="app-name">FINEGREEN 19x64</span>
      <div class="wbtns">
        <button aria-label="Minimize"><svg viewBox="0 0 10 10"><path d="M2 5h6" /></svg></button>
        <button aria-label="Restore"><svg viewBox="0 0 10 10"><path d="M2 4h5v4H2zM4 4V2h5v5H7" /></svg></button>
        <button aria-label="Close"><svg viewBox="0 0 10 10"><path d="M2 2l6 6M8 2L2 8" /></svg></button>
      </div>
    </header>
    <button class="logo" aria-label="Application menu">
      <svg viewBox="0 0 64 64">
        <defs><radialGradient id="lg" cx=".4" cy=".3"><stop offset="0" stop-color="#fff" /><stop offset="1" stop-color="#d9d9de" /></radialGradient></defs>
        <circle cx="32" cy="32" r="30" fill="url(#lg)" stroke="#8c8c92" stroke-width="3" />
        <path d="M8 36c6 3 10 1 14-6l5-7 6 13 6-9 6 11c4 3 8 0 11-3" fill="none" stroke="#d8131b" stroke-width="5" />
      </svg>
    </button>

    <nav class="menu">
      <button v-for="m in menus" :key="m" :class="{ on: m === activeMenu }" @click="activeMenu = m">{{ m }}</button>
    </nav>

    <section class="ribbon">
      <div v-for="p in panels" :key="p.id" class="panel">
        <div class="tools" :class="p.id">
          <button v-for="(t, i) in p.items" :key="i" class="big">
            <svg viewBox="0 0 24 24" v-html="big[t.icon]"></svg>
            <span>{{ t.lines[0] }}</span>
            <span>{{ t.lines[1] }}<i v-if="t.drop" class="caret"></i></span>
          </button>
        </div>
        <div class="ptitle">{{ p.title }}</div>
      </div>
      <div class="blank"></div>
    </section>

    <div class="bars">
      <div v-for="b in bars" :key="b.id" class="bar" :class="b.id">
        <div v-for="(tb, i) in b.tools" :key="i" class="tb">
          <i class="grip"></i>
          <template v-for="(t, j) in tb" :key="j">
            <i v-if="t === '|'" class="sep"></i>
            <select v-else-if="t === '#'" class="dimstyle" aria-label="Dimension style"><option>GCAD_VERT_E</option></select>
            <button v-else class="ic" :aria-label="t"><svg viewBox="0 0 16 16" v-html="glyphs[t]"></svg></button>
          </template>
        </div>
      </div>
    </div>

    <main class="work">
      <aside class="side">
        <section class="props">
          <h2>Property</h2>
          <div class="pbody">
            <div class="rail"></div>
            <div class="pcontent">
              <div class="pick">
                <select aria-label="Selection"><option>No selection</option></select>
                <button aria-label="Select"><svg viewBox="0 0 16 16" v-html="glyphs.sel"></svg></button>
                <button aria-label="Quick select"><svg viewBox="0 0 16 16" v-html="glyphs.quick"></svg></button>
                <button aria-label="Filter"><svg viewBox="0 0 16 16" v-html="glyphs.filt"></svg></button>
              </div>
              <div v-for="g in groups" :key="g.title" class="group">
                <h3>{{ g.title }}<i></i></h3>
                <table>
                  <tbody>
                    <tr v-for="r in g.rows" :key="r.name">
                      <th scope="row">{{ r.name }}</th>
                      <td><i v-if="r.kind" :class="r.kind"></i>{{ r.value }}</td>
                    </tr>
                  </tbody>
                </table>
              </div>
            </div>
          </div>
        </section>
        <section class="views">
          <div class="vhead"></div>
          <div class="tree">
            <ul>
              <li class="root"><i class="box"></i><svg viewBox="0 0 16 16" v-html="glyphs.folder"></svg>Plan Views</li>
              <li v-for="(l, i) in levels" :key="l"><i class="branch"></i><b>{{ i === 6 ? '*' : '' }}</b>{{ l }}</li>
            </ul>
            <div class="hscroll"><span>‹</span><i></i><span>›</span></div>
          </div>
        </section>
      </aside>

      <section class="doc">
        <div class="tabs">
          <button class="tab off">Drawing1.dwg</button>
          <button class="tab on">D19_58.DWG <b>✕</b></button>
          <i class="tri"></i>
        </div>
        <div class="canvas">
          <svg class="scene" viewBox="0 0 837 361" preserveAspectRatio="xMinYMin meet">
            <defs>
              <filter id="grain" x="0" y="0" width="1" height="1" color-interpolation-filters="sRGB">
                <feTurbulence type="fractalNoise" baseFrequency=".3" numOctaves="2" seed="4" result="n" />
                <feColorMatrix in="n" type="matrix" values=".7 .1 0 0 .1  .7 .05 .05 0 .1  .6 0 .2 0 .12  0 0 0 0 1" result="c" />
                <feComposite in="SourceGraphic" in2="c" operator="arithmetic" k1=".9" k2=".55" result="m" />
                <feComposite in="m" in2="SourceGraphic" operator="in" />
              </filter>
            </defs>
            <g transform="translate(47 45) scale(.3333)">
              <g filter="url(#grain)">
                <g fill="#b9b9b9">
                  <path d="M94 570L400 600 700 600 820 600V660H390L94 632z" />
                  <path d="M252 108l80 6v80l-60 40-20 140h-27v-90l30-90z" />
                  <path d="M225 280h52v120h-52z" />
                  <path d="M290 150l378 36v220l-140 4v210l-130-6V236l-110-4z" />
                  <path d="M272 234l140 8v368l-140-10z" />
                  <path d="M27 434l93 4 5 142-98-4z" />
                  <path d="M148 444l60-4v82l-60 63z" />
                  <path d="M192 366h82v76h-62v78h60v82l-107-12v-66l45-10v-76h-18z" />
                  <path d="M705 246l55 6v222l-55 4z" />
                  <path d="M536 45l119-3v76l-119 4z" />
                  <path d="M526 410l178-4v210l-240 2-14-64h76z" />
                  <path d="M705 480l50-8 10 28-20 82-42 34z" />
                </g>
                <g fill="#9a9a9a">
                  <path d="M668 186l115-56v95l-78 20v75l-37 15z" />
                  <path d="M664 332l41-14v90h-41z" />
                  <path d="M760 252l58-22v220l-58 24z" />
                  <path d="M750 510l38 4v78h-40z" />
                </g>
                <g fill="#727270">
                  <path d="M120 438l28 6v141l-26-5zM394 240l18-6 4 372-26 4zM655 42l50-20v86l-50 10z" />
                  <path d="M705 476l50-4-6 60-40 20z" />
                </g>
                <g fill="#525250">
                  <path d="M27 434l93-72 75 8-50 74z" />
                  <path d="M252 108l68-26 112 12v18l-52 0-60 22z" />
                  <path d="M286 150l94-38 142 8 133-2 48-18 56 6v22l26 4-117 58-380-38z" />
                  <path d="M522 38l78-2 32-20 73 6-50 20-55 3-64-1v78h-14z" />
                  <path d="M705 242l20-20 92 4-57 26zM228 204l50-18 12 10v28l132 8-20 10-128-6-18-14-28-4z" />
                  <path d="M192 364l60-26 18 4v26zM165 522l50-16 57 2v22zM522 408l10-14 172 4-4 10z" />
                  <path d="M448 548l50-16 28 4v14zM750 500l38 6v22h-38zM400 604l60 10 240-2 80-22 40 4v40H385z" />
                </g>
              </g>
              <g v-for="(q, i) in glazing" :key="i">
                <polygon :points="quad(q)" fill="#3c4355" stroke="#713b2a" stroke-width="2" />
                <path :d="mullions(q)" fill="none" stroke="#7c3424" stroke-width="3" />
              </g>
              <g fill="#11182f">
                <path d="M415 176l110 10v12l-110-12zM415 250l110 11v10l-110-11zM417 322l108 11v10l-108-11zM638 420h55v14l-55-6z" />
              </g>
              <g fill="#b7b9c2" opacity=".7">
                <path d="M764 272l12-5v36l-12 4zM782 264l12-5v36l-12 4zM764 346l12-5v34l-12 4zM782 340l12-5v34l-12 4zM764 414l12-4v34l-12 4zM782 408l12-4v30l-12 4z" />
                <path d="M608 470l86-8v20h-86zM188 574l82 8v9l-82-6zM280 588l110 10v6l-110-8zM548 570l60-2v4l-60 2z" />
              </g>
              <path d="M280 244l18 2v60l-18-1zM280 319l18 2v58l-18-1zM280 393l18 2v56l-18-1zM280 468l18 2v56l-18-1z" fill="#5b6478" />
              <path d="M628 62l18-1v56l-18 1z" fill="#8c2e0e" />
              <path d="M570 492l24-6v56l-24 14z" fill="#80807e" stroke="#222" stroke-width="2" />
              <path d="M232 264c6 14 20 24 34 28v8c-20-4-34-20-34-30z" fill="#ccc" />
              <g fill="#0e1218" stroke="#55607c" stroke-width="3"><circle cx="42" cy="543" r="8" /><circle cx="70" cy="545" r="8" /><circle cx="105" cy="547" r="8" /></g>
            </g>
            <g fill="none" stroke-width="1">
              <path d="M27 337V309M23 309l4-11 4 11z" stroke="#1414c8" />
              <path d="M27 337l27 2M54 336l12 4-12 3z" stroke="#c81414" />
              <path d="M27 337l8-5" stroke="#10c010" /><circle cx="38" cy="331" r="4" stroke="#10c010" /><path d="M34 333l8-4" stroke="#10c010" />
            </g>
            <path d="M286 0h16l-6 2z" fill="#8a8a88" />
            <g class="ucs"><text x="23" y="291">Z</text><text x="43" y="331">Y</text><text x="72" y="346">X</text></g>
          </svg>

          <div class="sim">
            <div class="stitle">
              <svg viewBox="0 0 16 16"><path d="M1 2h14v12H1z" fill="#fff" stroke="#667" /><path d="M2 3h6v10H2z" fill="#2f7f86" /><path d="M10 5h3v6h-3z" fill="#9db" /></svg>
              <span>Simulation Results</span>
              <div class="wbtns">
                <button aria-label="Minimize"><svg viewBox="0 0 10 10"><path d="M2 5h6" /></svg></button>
                <button aria-label="Maximize"><svg viewBox="0 0 10 10"><path d="M2 2h6v6H2z" /></svg></button>
                <button aria-label="Close"><svg viewBox="0 0 10 10"><path d="M2 2l6 6M8 2L2 8" /></svg></button>
              </div>
            </div>
            <div class="controls">
              <fieldset>
                <legend>Type</legend>
                <label><input v-model="kind" type="radio" name="kind" value="chart">Chart</label>
                <label><input v-model="kind" type="radio" name="kind" value="grid">Detailed Grid</label>
              </fieldset>
              <div class="zone">
                <select aria-label="Zone"><option>Building</option></select>
                <p>Surface Area (m²): 1208.450<br>Volume (m3): 3487.380</p>
              </div>
              <div class="acts">
                <div><button class="w44">Show errors</button><button class="w41">Report</button><button class="w44">Idf view</button><button class="w49">Variables/Meters</button><button class="w49">Test cases</button></div>
                <div><button class="w48">Data selection...</button><button class="w44">Print setup...</button><button class="w37"><svg viewBox="0 0 16 16" v-html="glyphs.printc"></svg>Print</button><button class="w49">Results viewer</button></div>
              </div>
            </div>
            <div class="pane">
              <svg class="plots" viewBox="0 0 454 204" preserveAspectRatio="xMinYMin slice">
                <g transform="translate(-10 3) scale(.3333)">
                  <path v-for="x in [178, 221, 263, 305, 348, 399, 442, 484, 525, 570, 617, 665, 710, 750, 793, 847, 903, 957, 1015]" :key="x" :d="`M${x} 56V406`" class="grid" />
                  <path v-for="y in [71, 127, 182, 238, 294, 350]" :key="y" :d="`M128 ${y}H1043`" class="grid" />
                  <path d="M138 56H1043V406" class="frame" />
                  <path d="M137 56V407H1043" fill="none" stroke="#111" stroke-width="6" />
                  <path d="M132 56V407" stroke="#333" stroke-width="5" stroke-dasharray="3 8" />
                  <path d="M138 411H1043" stroke="#333" stroke-width="6" stroke-dasharray="3 5" />
                  <polyline :points="outside" stroke="#4d93ab" class="curve" />
                  <polyline :points="radiant" stroke="#3b55a8" class="curve" />
                  <polyline :points="air" stroke="#ff9a38" class="curve" />
                  <polyline :points="operative" stroke="#f2511f" class="curve" />
                  <path d="M310 531H1003V640" class="frame" />
                  <path d="M770 560H1003M827 531v80M880 531v80M932 531v80M985 531v80" class="grid" />
                </g>
                <text x="177" y="17" class="hd" text-anchor="middle">Temperature</text>
                <text x="170" y="176" class="hd" text-anchor="middle">Heat Losses-Heat Gains</text>
                <text v-for="(t, i) in temps" :key="t" x="32" :y="29 + Math.round(i * 18.600)" text-anchor="end">{{ t }}</text>
                <text v-for="(d, i) in dates" :key="d" :x="dateX[i] - 1" y="148" text-anchor="middle">{{ d }}</text>
                <text transform="translate(17 84) rotate(-90)">°C</text>
                <rect x="349" y="25" width="94" height="33" class="lg" />
                <g v-for="(l, i) in legend" :key="l.t">
                  <path :d="`M353 ${31 + Math.round(i * 7.500)}h6`" :stroke="l.c" />
                  <text x="361" :y="33 + Math.round(i * 7.500)">{{ l.t }}</text>
                </g>
                <rect x="336" y="184" width="107" height="33" class="lg" />
                <path d="M339 189h6" stroke="#333" /><path d="M339 197h6" stroke="#3f5fb4" />
                <text x="348" y="191">Occupancy</text><text x="348" y="199">Task lighting</text><text x="348" y="206">General lighting</text>
              </svg>
              <div class="vscroll"><span>⌃</span><i></i><span>⌄</span></div>
            </div>
            <div class="hs"><i></i><span>›</span></div>
            <div class="status"></div>
          </div>
        </div>
        <div class="layouts">
          <button aria-label="First">|◀</button><button aria-label="Previous">◀</button><button aria-label="Next">▶</button><button aria-label="Last">▶|</button>
          <a href="#model" class="cur">Model</a><a href="#layout1">Layout1</a><a href="#layout2">Layout2</a>
        </div>
      </section>
    </main>

    <footer class="cmd">
      <div class="cside"><span>✕</span><span>▾</span></div>
      <div class="cmain">
        <div class="out"><p>Command:</p><p>Command:</p></div>
        <label class="in"><span>Command:</span><input type="text" aria-label="Command line"></label>
      </div>
      <div class="cscroll"><span>⌃</span><span>⌄</span></div>
    </footer>

    <div class="popup">
      <svg viewBox="0 0 420 154">
        <defs>
          <linearGradient id="gr"><stop offset="0" stop-color="#7c0000" /><stop offset="1" stop-color="#ff1f1f" /></linearGradient>
          <linearGradient id="gg"><stop offset="0" stop-color="#000800" /><stop offset=".3" stop-color="#042a06" /><stop offset="1" stop-color="#1ea01e" /></linearGradient>
          <linearGradient id="gb"><stop offset="0" stop-color="#00006a" /><stop offset="1" stop-color="#2020ff" /></linearGradient>
          <linearGradient id="gy"><stop offset="0" stop-color="#8c8c00" /><stop offset="1" stop-color="#ffff20" /></linearGradient>
        </defs>
        <g transform="translate(-6 -10) scale(.3333)">
          <path d="M53 84L68 68V415L53 430z" fill="#ffff70" stroke="#333" stroke-width="3" />
          <path d="M68 68H948V415H68z" fill="#d8e2ee" stroke="#555" stroke-width="3" />
          <path v-for="i in 9" :key="i" :d="`M70 ${66 + i * 35}H946`" stroke="#b6bcc9" stroke-width="3" />
          <path d="M53 430L68 415H948L932 430z" fill="#fff" stroke="#333" stroke-width="2" />
          <path d="M53 80V431H934" fill="none" stroke="#111" stroke-width="4" />
          <path d="M48 84V430" stroke="#333" stroke-width="6" stroke-dasharray="2 7" />
          <g v-for="c in cylinders" :key="c.id">
            <path :d="`M${c.x} ${c.top}V425a42 6 0 0 0 84 0V${c.top}z`" :fill="`url(#${c.id})`" />
            <ellipse :cx="c.x + 42" :cy="c.top" rx="42" ry="7" :fill="c.cap" />
          </g>
        </g>
        <text x="151" y="8" class="hd" text-anchor="middle">Temperature</text>
        <text x="160" y="151" text-anchor="middle">Temperature</text>
        <text v-for="i in 11" :key="i" x="8" :y="136 - Math.round((i - 1) * 11.600)" text-anchor="end">{{ (i - 1) * 2 }}</text>
        <rect x="322" y="17" width="94" height="34" class="lg" />
        <g v-for="(l, i) in legend" :key="l.t">
          <rect x="326" :y="20 + Math.round(i * 7.500)" width="6" height="6" :fill="l.b" />
          <text x="334" :y="25 + Math.round(i * 7.500)">{{ l.t }}</text>
        </g>
      </svg>
    </div>
  </div>
</template>

<style>
body { background: #404040; overflow: hidden; }
</style>

<style scoped>
* { box-sizing: border-box; margin: 0; padding: 0; }
button, select, input { font: inherit; color: inherit; border: 0; background: none; }
i, b { font-style: normal; }
svg { display: block; }
select { appearance: none; border-radius: 0; padding: 0 2px; background: linear-gradient(45deg, transparent 50%, #444 50%) right 6px center / 3px 3px no-repeat, linear-gradient(-45deg, transparent 50%, #444 50%) right 3px center / 3px 3px no-repeat, #fff; }
.shell { position: relative; display: flex; flex-direction: column; height: 100vh; background: #404040; font: 6px/7px "Open Sans", "Noto Sans", sans-serif; color: #0c0d10; }

.title { display: flex; align-items: center; height: 13px; background: #fff; flex: none; }
.quick { display: flex; align-items: center; height: 12px; margin-left: 24px; padding: 0 4px 0 2px; background: #d5d9e1; border-radius: 0 6px 6px 0; border: 1px solid #c0c4cc; border-left: 0; border-top: 0; }
.qa { width: 12px; height: 11px; }
.qa svg { width: 11px; height: 11px; margin: 0 auto; }
.gap { width: 2px; }
.caret { display: inline-block; width: 3px; height: 2px; background: #333; clip-path: polygon(0 0, 100% 0, 50% 100%); margin: 0 1px 1px 2px; }
.quick .caret { margin: 0 1px; }
.more { width: 7px; height: 11px; margin-left: 3px; background: #e4e5e8; }
.more .caret { margin: 0; }
.app-name { flex: 1; padding-left: 324px; white-space: nowrap; }
.wbtns { display: flex; }
.wbtns button { width: 25px; }
.wbtns svg { width: 8px; height: 8px; margin: 0 auto; fill: none; stroke: #222; stroke-width: 1; }
.logo { position: absolute; left: 2px; top: 0; width: 21px; height: 21px; z-index: 3; }

.menu { display: flex; height: 13px; padding-left: 26px; flex: none; color: #f2f2f2; }
.menu button { padding: 0 8px 0 7px; height: 13px; white-space: nowrap; font-weight: 600; }
.menu .on { background: linear-gradient(#fff, #d8dde4); color: #222; border-radius: 2px 2px 0 0; }

.ribbon { display: grid; grid-template-columns: 115fr 439fr 248fr 144fr; gap: 1px; height: 51px; padding: 1px 0 2px 2px; background: #c9cdd4; border-bottom: 2px solid #1d1d1d; flex: none; }
.panel { display: flex; flex-direction: column; border: 1px solid #f4f5f7; border-radius: 2px; background: linear-gradient(#d3d9e2 0, #c2c9d5 25%, #aeb7c7 26%, #c4ccd6 60%, #e6ebee 90%); min-width: 0; }
.tools { display: grid; flex: 1; }
.proj { grid-template-columns: 24fr 23fr 28fr 38fr; }
.data { grid-template-columns: 48fr 23fr 41fr 38fr 52fr 48fr 28fr 22fr 40fr 46fr 47fr; }
.calc { grid-template-columns: 35fr 22fr 25fr 31fr 46fr 46fr 39fr; }
.big { display: flex; flex-direction: column; align-items: center; justify-content: flex-start; padding-top: 3px; min-width: 0; white-space: nowrap; font-weight: 500; color: #000; }
.big svg { width: 18px; height: 18px; margin-bottom: 2px; flex: none; }
.big span { line-height: 7px; height: 7px; }
.ptitle { height: 7px; background: #adb1b4; text-align: center; font-weight: 600; }
.blank { background: linear-gradient(#c9d0da 0, #c0c7d3 25%, #aeb7c7 26%, #ccd3da 60%, #f0f3f4); }

.bars { flex: none; }
.bar { display: grid; height: 15px; }
.one { grid-template-columns: 50fr 293fr 277fr 321fr 9fr; }
.two { grid-template-columns: 392fr 62fr 62fr 87fr 74fr 37fr 236fr; }
.three { grid-template-columns: 62fr 888fr; }
.tb { display: flex; align-items: center; min-width: 0; padding-right: 2px; background: linear-gradient(#dcdfe5, #b4bac6 35%, #8f96a6 92%, #555b68); border-right: 1px solid #6c7280; }
.grip { width: 2px; height: 10px; margin: 0 2px 0 1px; background: repeating-linear-gradient(#444a58 0 1px, transparent 1px 2px); flex: none; }
.sep { width: 1px; height: 8px; margin: 0 2px; background: #7b8291; flex: none; }
.ic { flex: 1 1 12px; min-width: 0; height: 13px; }
.ic svg { width: 11px; height: 11px; margin: 0 auto; }
.dimstyle { width: 54px; height: 11px; flex: none; font-family: "Liberation Sans", sans-serif; padding: 0 10px 0 1px; margin-right: 5px; }

.work { display: flex; flex: 1; min-height: 0; }
.side { display: flex; flex-direction: column; width: 108px; flex: none; margin-right: 4px; background: #565656; font-family: "Liberation Sans", Arial, sans-serif; }
.props { height: 191px; display: flex; flex-direction: column; flex: none; }
.props h2 { height: 11px; margin-top: 1px; background: #979797; padding-left: 6px; font: bold 7px/11px "Open Sans", sans-serif; border-left: 1px solid #444; }
.pbody { display: flex; flex: 1; background: #f0f0f0; min-height: 0; overflow: hidden; border-bottom: 1px solid #c4c4c4; }
.rail { width: 5px; height: 61px; margin: 23px 3px 0 1px; background: #bdbdbd; flex: none; }
.pcontent { width: 96px; }
.pick { display: flex; gap: 3px; margin: 7px 0 4px; height: 12px; }
.pick select { width: 53px; border: 1px solid #a8a8a8; background-color: #e8e8e8; height: 12px; padding: 0 1px; }
.pick button { width: 12px; border: 1px solid #a8a8a8; background: #e8e8e8; }
.pick svg { width: 10px; height: 10px; }
.group { margin-bottom: 2px; }
.group h3 { display: flex; align-items: center; height: 9px; background: #a2a2a2; border-bottom: 1px solid #777; font: bold 7px/9px "Liberation Sans", sans-serif; padding: 0 3px; }
.group h3 i { width: 5px; height: 3px; margin-left: auto; background: #111; clip-path: polygon(50% 0, 100% 100%, 0 100%); }
.group table { width: 88px; margin-left: 8px; border-collapse: collapse; table-layout: fixed; }
.group th, .group td { height: 10px; line-height: 8px; border: 1px solid #b2b2b2; font-weight: 400; text-align: left; padding: 0 2px; white-space: nowrap; overflow: hidden; background: #fff; }
.group th { background: #f2f2f2; }
.color { display: inline-block; width: 6px; height: 6px; background: #ff0; border: 1px solid #444; margin-right: 3px; vertical-align: -1px; }
.line { display: inline-block; width: 15px; height: 1px; background: #333; margin-right: 2px; vertical-align: 2px; }

.views { flex: 1; display: flex; flex-direction: column; min-height: 0; margin-bottom: 2px; }
.vhead { height: 8px; margin: 3px 0 0; background: #8e8e8e; }
.tree { flex: 1; display: flex; flex-direction: column; margin: 3px 0 0; border: 3px solid #f0f0f0; outline: 1px solid #999; outline-offset: -3px; background: #fff; padding: 2px 1px 1px 2px; font-family: Roboto, "Liberation Sans", sans-serif; }
.tree ul { display: flex; flex-direction: column; height: 79px; list-style: none; }
.tree li { flex: 1; display: flex; align-items: center; white-space: nowrap; }
.tree .root { gap: 3px; padding-left: 3px; }
.root svg { width: 9px; height: 9px; }
.box { width: 6px; height: 6px; border: 1px solid #999; background: linear-gradient(#333, #333) center / 3px 1px no-repeat; }
.branch { width: 6px; height: 9px; margin-left: 16px; border-left: 1px dotted #999; background: linear-gradient(#aaa, #aaa) center / 100% 1px no-repeat; flex: none; }
.tree li b { width: 13px; text-align: right; padding-right: 1px; font-weight: 400; flex: none; }
.hscroll { display: flex; gap: 4px; height: 9px; margin-top: auto; font-size: 9px; line-height: 7px; background: #f0f0f0; }
.hscroll i { width: 73px; background: #cdcdcd; height: 8px; }
.hscroll span { width: 5px; text-align: center; font-weight: 700; }

.doc { flex: 1; display: flex; flex-direction: column; min-width: 0; margin-bottom: 2px; }
.tabs { display: flex; align-items: flex-end; height: 13px; background: linear-gradient(#a3a9b8, #8189a0); border-bottom: 2px solid #f2f2f2; font: 600 6px/10px "Open Sans", sans-serif; flex: none; }
.tab { height: 10px; white-space: nowrap; }
.tab.off { width: 58px; margin-left: 2px; padding-left: 10px; background: #2c2c2e; color: #d8d8d8; text-align: left; clip-path: polygon(10px 0, 100% 0, 100% 100%, 0 100%); }
.tab.on { padding: 0 4px 0 10px; margin-left: -8px; background: #fff; clip-path: polygon(9px 0, 100% 0, 100% 100%, 0 100%); }
.tab b { margin-left: 3px; }
.tri { width: 6px; height: 4px; margin: 0 4px 3px auto; background: #1c2c4c; clip-path: polygon(0 0, 100% 0, 50% 100%); }
.canvas { position: relative; flex: 1; background: #000; margin-left: 1px; min-height: 0; overflow: hidden; }
.scene { width: 837px; height: 361px; }
.ucs { font: 11px "Liberation Sans", sans-serif; fill: #c8c8c8; }

.sim { position: absolute; left: 347px; right: 10px; top: 4px; bottom: 12px; display: flex; flex-direction: column; background: #f0f0f0; border-left: 1px solid #666; }
.stitle { display: flex; align-items: center; gap: 4px; height: 17px; padding: 0 0 2px 4px; background: #fff; border-bottom: 1px solid #333; font-size: 6px; flex: none; }
.stitle > svg { width: 8px; height: 8px; }
.stitle .wbtns { margin-left: auto; }
.stitle .wbtns svg { width: 9px; height: 9px; }
.controls { display: flex; height: 50px; padding: 5px 8px 0 18px; flex: none; }
fieldset { width: 100px; height: 35px; border: 1px solid #dcdcdc; padding: 1px 2px; }
legend { margin-left: 1px; height: 7px; }
fieldset label { display: flex; align-items: center; gap: 2px; height: 13px; }
fieldset input { appearance: none; width: 7px; height: 7px; border: 1px solid #333; border-radius: 50%; background: #fff; }
fieldset input:checked { background: radial-gradient(circle, #222 0 1px, #222 1px, #fff 2px); }
.zone { width: 96px; margin: 4px 11px 0 3px; }
.zone select { width: 100%; height: 12px; border: 1px solid #8a8a8a; }
.zone p { margin: 2px 0 0 9px; line-height: 8px; white-space: nowrap; }
.acts { display: flex; flex-direction: column; gap: 4px; margin-top: 3px; min-width: 0; }
.acts div { display: flex; gap: 4px; }
.acts button { display: flex; align-items: center; justify-content: center; gap: 1px; height: 13px; border: 1px solid #a6a6a6; background: #e2e2e2; white-space: nowrap; }
.acts svg { width: 8px; height: 8px; }
.w37 { width: 38px; } .w41 { width: 42px; } .w44 { width: 44px; } .w48 { width: 48px; } .w49 { width: 50px; }
.pane { display: flex; height: 205px; margin: 0 8px 0 8px; border: 1px solid #777; border-right: 0; border-bottom: 0; background: #d8e2ee; flex: none; }
.plots { flex: 1; min-width: 0; height: 204px; }
.plots text, .popup text { font: 6px "Liberation Sans", Arial, sans-serif; fill: #000; }
.plots .hd, .popup .hd { fill: #1010f0; }
.grid { fill: none; stroke: #b4bac8; stroke-width: 3; }
.frame { fill: none; stroke: #333; stroke-width: 4; }
.curve { fill: none; stroke-width: 3; }
.lg { fill: #fff; stroke: #333; }
.vscroll { display: flex; flex-direction: column; align-items: center; justify-content: space-between; width: 9px; background: #f0f0f0; font-size: 8px; flex: none; }
.vscroll i { width: 8px; height: 80px; background: #cdcdcd; margin-bottom: 102px; }
.hs { display: flex; align-items: center; justify-content: space-between; height: 9px; margin: 0 17px 0 9px; background: #f0f0f0; font-size: 10px; flex: none; }
.hs i { height: 8px; flex: 1; background: #cdcdcd; margin-right: 12px; }
.status { margin-top: 28px; border-top: 2px solid #8c8c8c; }

.layouts { display: flex; align-items: center; height: 9px; background: #f0f0f0; font-size: 6px; flex: none; }
.layouts button { width: 9px; height: 8px; border-right: 1px solid #aaa; font: 4px/8px "DejaVu Sans", sans-serif; }
.layouts a { height: 9px; line-height: 9px; padding: 0 7px 0 4px; color: #222; text-decoration: none; background: linear-gradient(115deg, transparent 49%, #333 50%, transparent 60%) right top / 5px 9px no-repeat; }
.layouts .cur { font-weight: 700; padding-left: 5px; background-color: #fff; }

.cmd { display: flex; height: 46px; flex: none; background: #fff; border-top: 2px solid #333; font: bold 7px/8px "Liberation Mono", monospace; }
.cside { display: flex; flex-direction: column; gap: 3px; align-items: center; width: 11px; padding-top: 2px; background: #8d8d8d; font: 7px/8px "DejaVu Sans", sans-serif; border-right: 1px solid #666; }
.cmain { flex: 1; display: flex; flex-direction: column; border-top: 1px solid #aaa; }
.out { height: 31px; padding: 8px 0 0 1px; border-bottom: 1px solid #888; }
.in { display: flex; padding: 2px 1px; font-size: 6px; }
.in input { flex: 1; outline: 0; }
.cscroll { display: flex; flex-direction: column; justify-content: space-between; width: 8px; height: 31px; color: #888; background: #f0f0f0; margin-top: 1px; text-align: center; }

.popup { position: absolute; left: 287px; top: 386px; width: 428px; height: 162px; border: 4px solid #696969; background: #d8e2ee; }
</style>
